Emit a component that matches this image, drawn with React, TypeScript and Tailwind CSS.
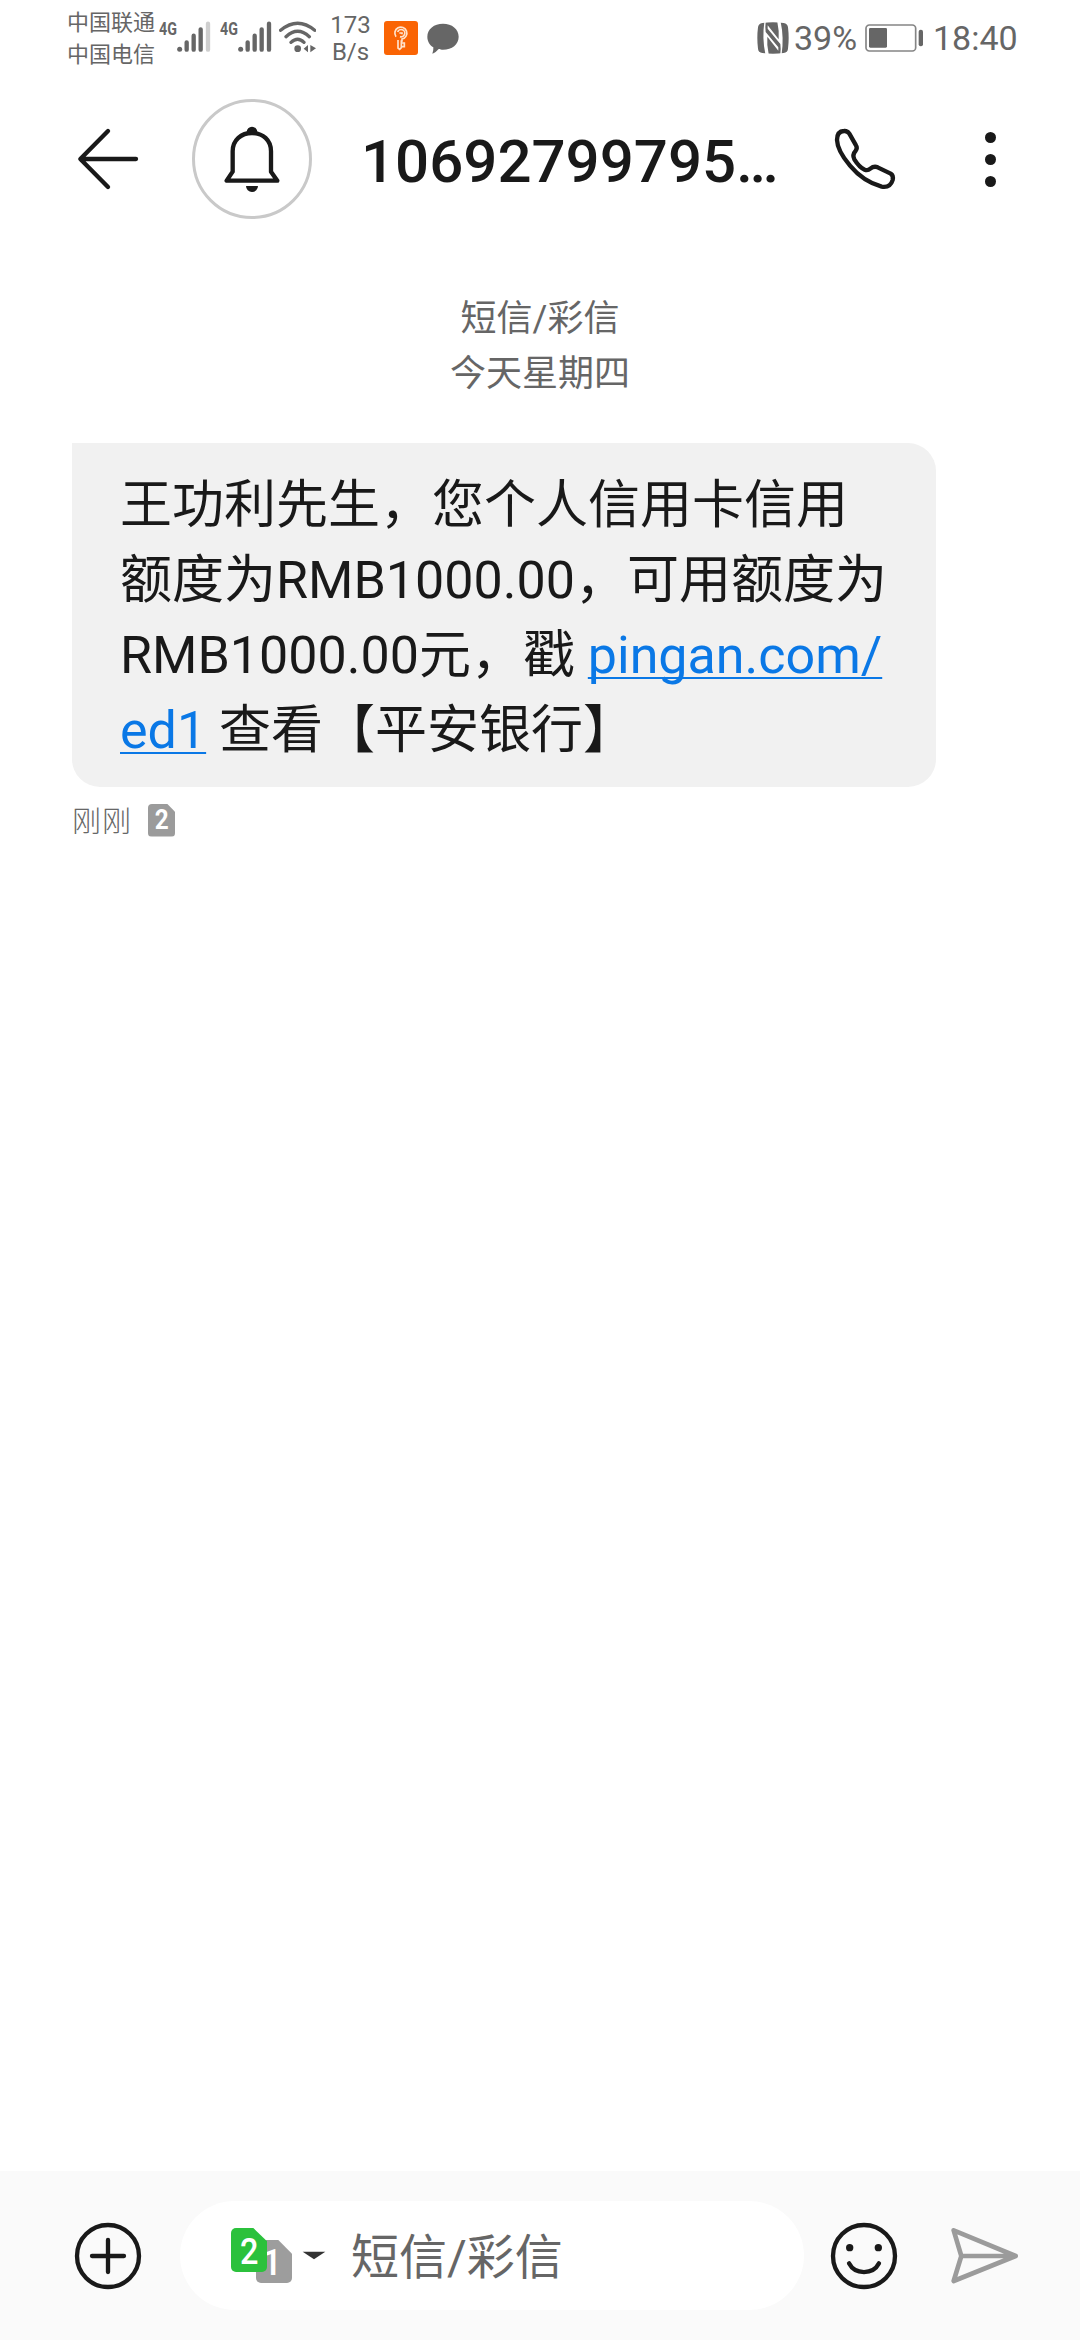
import React from 'react'

const FONT = "font-['Roboto','Noto_Sans_CJK_SC',sans-serif]"

interface SignalProps {
  full?: boolean
}

const Signal: React.FC<SignalProps> = ({ full }) => (
  <div className="flex h-8 w-[52px] items-start">
    <span className="w-[18px] shrink-0 origin-left scale-x-75 text-[19px] leading-[16px] font-bold">4G</span>
    <svg className="h-8 w-[34px] shrink-0" viewBox="0 0 102 96" fill="none" stroke="currentColor" strokeWidth="13" strokeLinecap="round">
      <circle cx="8" cy="85" r="7.5" fill="currentColor" stroke="none" />
      <path d="M29 64V86M50 44V86M71 25V86" />
      <path d="M93 8V86" className={full ? '' : 'stroke-[#cfcfcf]'} />
    </svg>
  </div>
)

const WifiIcon: React.FC = () => (
  <svg className="h-8 w-[37px]" viewBox="0 0 111 96" fill="none" stroke="currentColor" strokeWidth="10" strokeLinecap="round">
    <path d="M5 28Q56-14 107 28M21 47Q56 15 91 47M36 64Q56 45 75 64" />
    <circle cx="56" cy="83" r="10" fill="currentColor" stroke="none" />
    <path d="M74 83L87 72V94ZM94 72L111 82L94 94Z" fill="currentColor" stroke="none" />
  </svg>
)

const KeyBadge: React.FC = () => (
  <svg className="h-[34px] w-[34px]" viewBox="0 0 102 102" fill="none">
    <rect width="102" height="102" rx="9" fill="#fa6404" />
    <g stroke="#ffe3cd" strokeWidth="5">
      <path d="M36 47A18 18 0 1 1 54 54V62M42 57V81L47 85L52 80V58" />
      <path d="M41 33A11 11 0 1 1 48 47M46 36H54V40" />
      <path d="M52 66H61V77H52" />
    </g>
  </svg>
)

const ChatIcon: React.FC = () => (
  <svg className="h-[31px] w-8" viewBox="0 0 96 93" fill="currentColor">
    <path d="M48 2C75 2 95 18 95 41S75 80 48 80C43 80 39 80 35 78C29 85 23 90 16 92Q20 83 19 73C8 66 1 55 1 41C1 18 21 2 48 2Z" />
  </svg>
)

const NfcIcon: React.FC = () => (
  <svg className="h-8 w-8" viewBox="0 0 96 96">
    <path fill="currentColor" d="M16 3Q48-1 80 3Q92 5 93 16Q97 48 93 80Q92 91 80 93Q48 97 16 93Q4 91 3 80Q-1 48 3 16Q4 5 16 3Z" />
    <g fill="white">
      <path d="M22 0Q15 50 25 96H35Q29 68 31 44L64 86V76L26 30Q24 16 26 0Z" />
      <path d="M22 0Q15 50 25 96H35Q29 68 31 44L64 86V76L26 30Q24 16 26 0Z" transform="rotate(180 48 48)" />
    </g>
  </svg>
)

const BatteryIcon: React.FC = () => (
  <svg className="h-7 w-[59px]" viewBox="0 0 177 84">
    <rect x="3" y="3" width="149" height="78" rx="10" fill="none" stroke="#858585" strokeWidth="5" />
    <rect x="12" y="12" width="54" height="59" rx="4" fill="currentColor" />
    <rect x="161" y="17" width="13" height="50" rx="6" fill="currentColor" />
  </svg>
)

const StatusBar: React.FC = () => (
  <div className="flex h-20 justify-between pr-[63px] pl-[67px] text-[#666666]">
    <div className="flex items-start">
      <div className="w-[92px] pt-[7px] text-[22px] leading-[32px]">
        <div>中国联通</div>
        <div>中国电信</div>
      </div>
      <div className="flex pt-[21px]">
        <Signal />
        <div className="w-[9px]" />
        <Signal full />
        <div className="w-[7px]" />
        <WifiIcon />
      </div>
      <div className="w-[68px] pt-[12px] pl-px text-center text-[24px] leading-[27px]">
        <div>173</div>
        <div>B/s</div>
      </div>
      <div className="flex gap-[9px] pt-[21px]">
        <KeyBadge />
        <div className="pt-[2px]">
          <ChatIcon />
        </div>
      </div>
    </div>
    <div className="flex h-[76px] items-center text-[34px] leading-none">
      <NfcIcon />
      <span className="ml-[5px] w-[71px]">39%</span>
      <BatteryIcon />
      <span className="ml-[9px] w-[84px]">18:40</span>
    </div>
  </div>
)

const Header: React.FC = () => (
  <div className="flex h-[158px] items-center pl-[75px] text-[#191919]">
    <svg className="h-[66px] w-[66px]" viewBox="45 138 198 198" fill="none" stroke="currentColor" strokeWidth="13" strokeLinecap="round" strokeLinejoin="round">
      <path d="M228 237H62M144 153L61 237L144 321" />
    </svg>
    <div className="ml-[51px] flex h-[120px] w-[120px] items-center justify-center rounded-full border-[3px] border-[#c9c9c9]">
      <svg className="h-[70px] w-[60px] shrink-0" viewBox="486 132 180 210" fill="none" stroke="currentColor" strokeWidth="13">
        <path d="M500 302H652L633 275V214C633 180 608 159 576 159S518 180 518 214V275Z" strokeLinejoin="round" />
        <path d="M560 156A16 16 0 1 1 592 156ZM558 318H594A18 18 0 0 1 558 318Z" fill="currentColor" stroke="none" />
      </svg>
    </div>
    <div className="ml-[49px] w-[420px] pt-[5px] text-[60px] leading-none font-medium whitespace-nowrap">10692799795…</div>
    <svg className="ml-[49px] h-[70px] w-[70px]" viewBox="90 70 210 210" fill="none" stroke="currentColor" strokeWidth="13" strokeLinejoin="round">
      <path d="M111 118Q111 92 132 91Q142 90 148 99L168 134Q173 142 167 150Q156 162 163 176Q178 200 194 207Q203 211 211 204Q222 195 233 200L272 219Q281 225 278 238Q271 262 245 258Q190 243 150 195Q112 150 111 118Z" />
    </svg>
    <div className="ml-[85px] flex flex-col gap-[11px]">
      <span className="size-[11px] rounded-full bg-[#191919]" />
      <span className="size-[11px] rounded-full bg-[#191919]" />
      <span className="size-[11px] rounded-full bg-[#191919]" />
    </div>
  </div>
)

const Message: React.FC = () => (
  <div className="flex flex-col items-start pl-[72px]">
    <div className="h-[344px] w-[864px] rounded-[28px] rounded-tl-none bg-[#f1f1f1] pt-[25px] pl-[48px] text-[52px] leading-[75px] whitespace-pre text-[#191919]">
      <div>王功利先生，您个人信用卡信用</div>
      <div>额度为RMB1000.00，可用额度为</div>
      <div>
        RMB1000.00元，戳{' '}
        <a className="text-[#0a78e6] underline decoration-[2px] underline-offset-[4px] [text-decoration-skip-ink:none]">pingan.com/</a>
      </div>
      <div>
        <a className="text-[#0a78e6] underline decoration-[2px] underline-offset-[4px] [text-decoration-skip-ink:none]">ed1</a>
        {' 查看【平安银行】'}
      </div>
    </div>
    <div className="mt-[15px] flex items-center text-[#666666]">
      <span className="w-[76px] pt-[4px] text-[29px] leading-[32px] font-light tracking-[1px]">刚刚</span>
      <div className="flex h-[33px] w-[27px] items-center justify-center rounded-[4px] bg-[#9b9b9b] text-[27px] leading-none font-bold text-white [clip-path:polygon(0_0,70%_0,100%_25%,100%_100%,0_100%)]">
        <span className="scale-x-90">2</span>
      </div>
    </div>
  </div>
)

const SimPicker: React.FC = () => (
  <div className="relative mt-px h-[56px] w-[61px]">
    <div className="absolute top-[12px] left-[25px] flex h-[43px] w-[36px] items-center justify-center rounded-[5px] bg-[#9d9d9d] text-[36px] leading-none font-medium text-white [clip-path:polygon(0_0,62%_0,100%_32%,100%_100%,0_100%)]">
      <span className="mt-[3px] mr-[4px]">1</span>
    </div>
    <div className="absolute top-0 left-0 flex h-[44px] w-[36px] items-center justify-center rounded-[5px] bg-[#2bc13c] text-[36px] leading-none font-medium text-white [clip-path:polygon(0_0,62%_0,100%_30%,100%_100%,0_100%)]">
      <span className="mt-[3px] scale-x-90">2</span>
    </div>
  </div>
)

const Composer: React.FC = () => (
  <div className="flex h-[169px] items-center bg-[#fafafa] pl-[74px] text-[#191919]">
    <svg className="h-[68px] w-[68px]" viewBox="0 0 204 204" fill="none" stroke="currentColor" strokeWidth="13" strokeLinecap="round">
      <circle cx="102" cy="102" r="93" />
      <path d="M102 54V150M54 102H150" />
    </svg>
    <div className="ml-[38px] flex h-[109px] w-[624px] items-center rounded-full bg-white pl-[51px]">
      <SimPicker />
      <svg className="ml-[10px] h-[9px] w-[24px]" viewBox="0 0 72 27">
        <path d="M2 2H70L36 25Z" fill="#333333" />
      </svg>
      <span className="ml-[25px] pt-[5px] text-[48px] leading-none text-[#666666]">短信/彩信</span>
    </div>
    <svg className="ml-[26px] h-[68px] w-[68px]" viewBox="0 0 204 204" fill="none" stroke="currentColor" strokeWidth="13" strokeLinecap="round">
      <circle cx="102" cy="102" r="93" />
      <circle cx="59" cy="77" r="11" fill="currentColor" stroke="none" />
      <circle cx="145" cy="77" r="11" fill="currentColor" stroke="none" />
      <path d="M57 124C75 159 129 159 147 124" />
    </svg>
    <svg className="ml-[50px] h-[60px] w-[72px]" viewBox="564 228 216 180" fill="none" stroke="#9b9b9b" strokeWidth="14" strokeLinejoin="round">
      <path d="M581 241L767 318L581 393L604 318ZM604 318H767" />
    </svg>
  </div>
)

const App: React.FC = () => {
  return (
    <div className={`flex h-[2340px] w-[1080px] flex-col overflow-hidden bg-white ${FONT}`}>
      <StatusBar />
      <Header />
      <div className="flex flex-1 flex-col pt-[54px]">
        <div className="pb-[41px] text-center text-[36px] leading-[55px] text-[#666666]">
          <div>短信/彩信</div>
          <div>今天星期四</div>
        </div>
        <Message />
      </div>
      <Composer />
    </div>
  )
}

export default App
